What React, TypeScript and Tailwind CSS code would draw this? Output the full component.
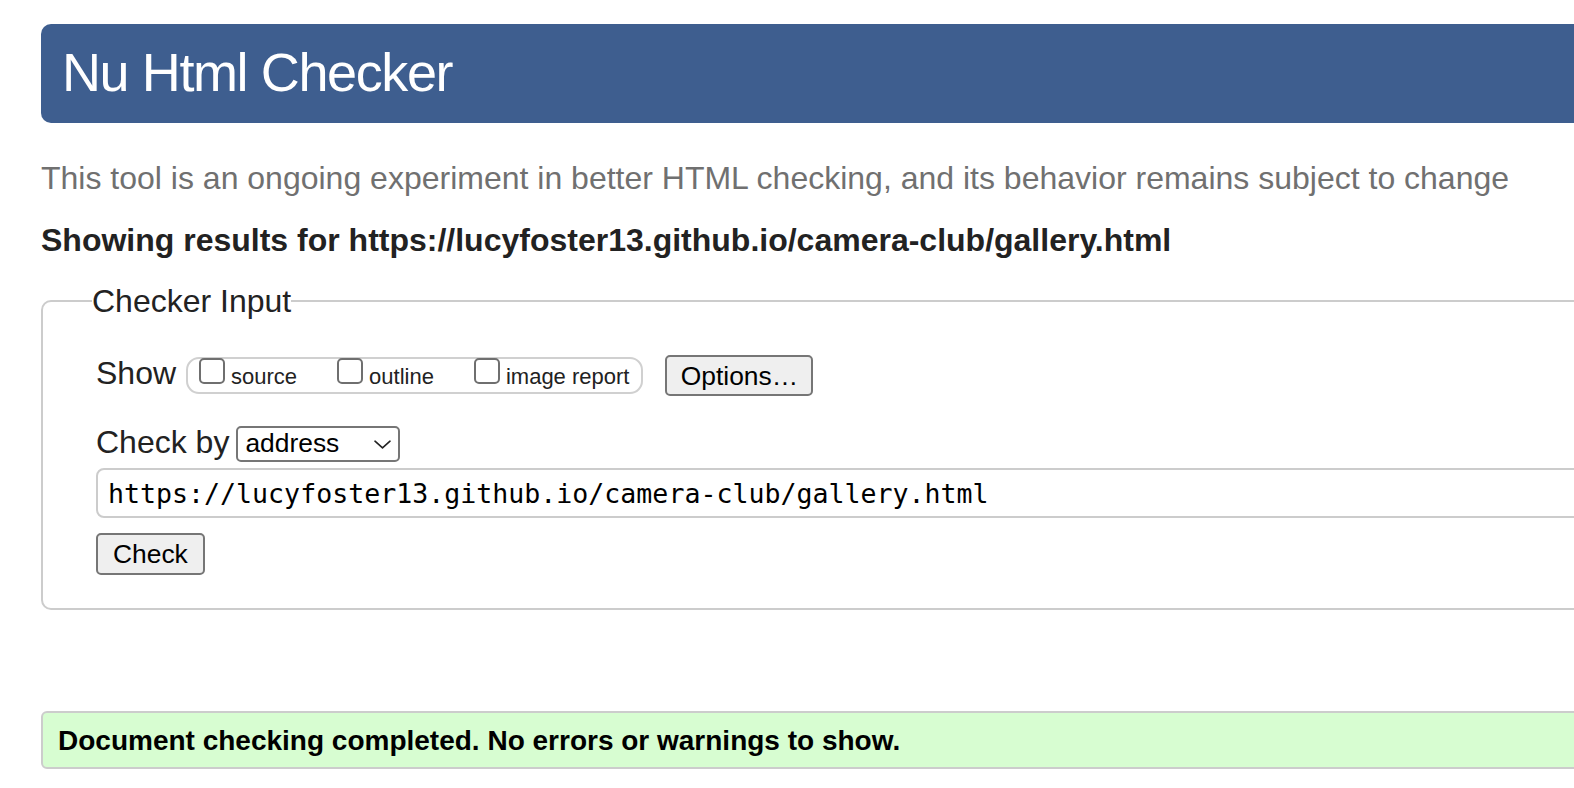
import React from "react";

function Box({ label, first }: { label: string; first?: boolean }) {
  return (
    <div className={`flex items-start ${first ? "" : "ml-[40px]"}`}>
      <span className="mt-[-1px] block h-[26px] w-[26px] shrink-0 rounded-[5px] border-2 border-[#6f6f6f] bg-white" />
      <span className="ml-[6px] mt-[5px] text-[22px] leading-[25px] text-[#222]">{label}</span>
    </div>
  );
}

export default function App() {
  return (
    <div className="h-[788px] w-[1574px] overflow-hidden bg-white font-['Liberation_Sans',Arial,sans-serif] text-[#222]">
      <div className="w-[1800px] pl-[41px] pt-[24px]">
        <h1 className="flex h-[99px] items-center rounded-[10px] bg-[#3e5e8f] pb-[4px] pl-[21px] text-[54px] leading-none tracking-[-1.4px] text-white">
          Nu Html Checker
        </h1>
        <p className="mt-[36px] text-[32px] leading-[38px] text-[#707070]">
          This tool is an ongoing experiment in better HTML checking, and its behavior remains subject to change
        </p>
        <p className="mt-[24px] text-[32px] font-bold leading-[38px] text-[#222]">
          Showing results for https://lucyfoster13.github.io/camera-club/gallery.html
        </p>
        <fieldset className="mt-[23px] rounded-[10px] border-2 border-[#cccccc] pb-[33px] pl-[53px]">
          <legend className="-ml-[4px] text-[32px] leading-[38px] text-[#222]">Checker Input</legend>
          <div className="mt-[32px] flex items-start">
            <span className="mt-[2px] text-[32px] leading-[38px]">Show</span>
            <div className="ml-[10px] mt-[5px] flex h-[37px] items-start rounded-[13px] border-2 border-[#d0d0d0] pl-[11px] pr-[12px]">
              <Box label="source" first />
              <Box label="outline" />
              <Box label="image report" />
            </div>
            <button className="ml-[22px] mt-[3px] w-[148px] rounded-[5px] border-2 border-[#767676] bg-[#efefef] pb-[3px] pt-[4px] text-[26.4px] leading-[30px] text-black">
              Options…
            </button>
          </div>
          <div className="mt-[27px] flex items-start">
            <span className="text-[32px] leading-[38px]">Check by</span>
            <div className="ml-[7px] mt-[3px] flex h-[36px] w-[164px] items-start justify-between rounded-[5px] border-2 border-[#767676] bg-white pl-[7px] pr-[7px]">
              <span className="text-[26.4px] leading-[30px] text-black">address</span>
              <svg className="mt-[12px]" width="17" height="9" viewBox="0 0 17 9" fill="none">
                <path d="M1 1.2 L8.5 7.8 L16 1.2" stroke="#222" strokeWidth="1.6" strokeLinecap="round" strokeLinejoin="round" />
              </svg>
            </div>
          </div>
          <div className="mt-[6px] h-[50px] rounded-l-[8px] border-2 border-[#cccccc] pl-[10px] pt-[10px] font-['DejaVu_Sans_Mono',monospace] text-[26.6px] leading-[28px] text-black">
            https://lucyfoster13.github.io/camera-club/gallery.html
          </div>
          <button className="mt-[15px] block rounded-[5px] border-2 border-[#767676] bg-[#efefef] px-[15px] pb-[4px] pt-[4px] text-[26.4px] leading-[30px] text-black">
            Check
          </button>
        </fieldset>
        <div className="mt-[101px] h-[58px] rounded-[6px] border-2 border-[#cccccc] bg-[#d7fdd1] pl-[15px] pt-[12px] text-[28px] font-bold leading-[32px] text-black">
          Document checking completed. No errors or warnings to show.
        </div>
      </div>
    </div>
  );
}
